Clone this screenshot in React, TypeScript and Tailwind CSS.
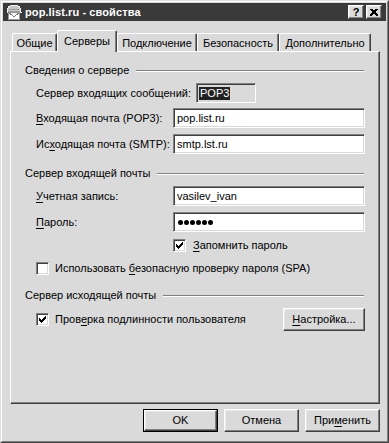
import React from "react";

const FONT = { fontFamily: '"Liberation Sans", Arial, sans-serif' };

function U({ children }: { children: React.ReactNode }) {
  return <span className="underline decoration-1 underline-offset-[2px]">{children}</span>;
}

function Sunken({ children, className = "" }: { children?: React.ReactNode; className?: string }) {
  return (
    <div
      className={
        "border border-t-[#808080] border-l-[#808080] border-b-white border-r-white shadow-[inset_1px_1px_0_#404040,inset_-1px_-1px_0_#dadada] " +
        className
      }
    >
      {children}
    </div>
  );
}

function Field({ value, children }: { value?: string; children?: React.ReactNode }) {
  return (
    <Sunken className="h-[20px] w-[192px] bg-white flex items-center pl-[3px] text-[11px] text-black">
      {children ?? value}
    </Sunken>
  );
}

function Check() {
  const px: [number, number][] = [
    [6, 0],
    [5, 1], [6, 1],
    [0, 2], [4, 2], [5, 2], [6, 2],
    [0, 3], [1, 3], [3, 3], [4, 3], [5, 3],
    [0, 4], [1, 4], [2, 4], [3, 4], [4, 4],
    [1, 5], [2, 5], [3, 5],
    [2, 6],
  ];
  return (
    <svg width="7" height="7" viewBox="0 0 7 7" shapeRendering="crispEdges">
      {px.map(([x, y], i) => (
        <rect key={i} x={x} y={y} width="1" height="1" fill="#000" />
      ))}
    </svg>
  );
}

function CheckBox({ checked }: { checked?: boolean }) {
  return (
    <Sunken className="w-[13px] h-[13px] bg-white flex items-center justify-center shrink-0">
      {checked && <Check />}
    </Sunken>
  );
}

function Raised({ children, className = "" }: { children?: React.ReactNode; className?: string }) {
  return (
    <div
      className={
        "bg-[#dadada] border border-t-white border-l-white border-b-[#404040] border-r-[#404040] shadow-[inset_-1px_-1px_0_#808080,inset_1px_1px_0_#e8e8e8] flex items-center justify-center " +
        className
      }
    >
      {children}
    </div>
  );
}

function GroupHeader({ title }: { title: string }) {
  return (
    <div className="flex items-center h-[13px] ml-[14px] mr-[15px]">
      <span className="text-[11px] leading-[13px] whitespace-nowrap">{title}</span>
      <div className="flex-1 ml-[7px] h-[2px] border-t border-t-[#808080] border-b border-b-white" />
    </div>
  );
}

function Tab({ label, w, selected }: { label: string; w: string; selected?: boolean }) {
  if (selected) {
    return (
      <div
        className={
          "relative z-10 -mb-px h-[22px] bg-[#dadada] border-t border-l border-t-white border-l-white border-r border-r-[#404040] shadow-[inset_-1px_0_0_#808080] rounded-t-[2px] flex items-start justify-center pt-[2px] text-[11px] " +
          w
        }
      >
        {label}
      </div>
    );
  }
  return (
    <div
      className={
        "h-[18px] bg-[#dadada] border-t border-l border-t-white border-l-white border-r border-r-[#404040] shadow-[inset_-1px_0_0_#808080] rounded-t-[2px] flex items-center justify-center pt-[1px] text-[11px] " +
        w
      }
    >
      {label}
    </div>
  );
}

function TitleIcon() {
  return (
    <svg width="17" height="16" viewBox="0 0 17 16" shapeRendering="crispEdges">
      <path d="M2 8 C2 3 5 1 9 1 C13 1 16 3 16 8 Z" fill="#c8c8c8" stroke="#f0f0f0" strokeWidth="1" />
      <path d="M4 5 L14 5" stroke="#9a9a9a" />
      <path d="M3 7 L15 7" stroke="#9a9a9a" />
      <rect x="3.5" y="8.5" width="11" height="7" fill="#ffffff" stroke="#9a9a9a" />
      <path d="M3.5 8.5 L9 12.5 L14.5 8.5" fill="none" stroke="#7a7a7a" />
    </svg>
  );
}

export default function App() {
  return (
    <div style={FONT} className="w-[389px] h-[443px] text-black">
      <div className="w-full h-full border border-t-[#e0e0e0] border-l-[#e0e0e0] border-b-[#404040] border-r-[#404040]">
        <div className="w-full h-full border border-t-white border-l-white border-b-[#808080] border-r-[#808080] bg-[#dadada] p-px flex flex-col">
          {/* Title bar */}
          <div className="h-[18px] bg-[#3a3a3a] flex items-center pl-[2px] pr-[4px]">
            <TitleIcon />
            <span className="ml-[3px] text-white font-bold text-[11px] leading-none tracking-[0.1px]">
              pop.list.ru - свойства
            </span>
            <div className="ml-auto flex items-center gap-[2px]">
              <Raised className="w-[16px] h-[14px]">
                <span className="font-bold text-[11px] leading-none mt-[1px]">?</span>
              </Raised>
              <Raised className="w-[16px] h-[14px]">
                <svg width="8" height="7" viewBox="0 0 8 7" shapeRendering="crispEdges">
                  <path d="M0.5 0 L7.5 7 M1.5 0 L8.5 7 M7.5 0 L0.5 7 M6.5 0 L-0.5 7" stroke="#000" strokeWidth="1" />
                </svg>
              </Raised>
            </div>
          </div>

          {/* Tabs */}
          <div className="ml-[7px] mt-[9px] pl-[2px] flex items-end h-[21px]">
            <Tab label="Общие" w="w-[45px]" />
            <Tab label="Серверы" w="w-[60px]" selected />
            <Tab label="Подключение" w="w-[80px]" />
            <Tab label="Безопасность" w="w-[82px]" />
            <Tab label="Дополнительно" w="w-[92px]" />
          </div>

          {/* Panel */}
          <div className="ml-[7px] w-[370px] h-[353px] border border-t-white border-l-white border-b-[#404040] border-r-[#404040] shadow-[inset_-1px_-1px_0_#808080] text-[11px] flex flex-col">
            <div className="mt-[12px]">
              <GroupHeader title="Сведения о сервере" />
            </div>

            <div className="mt-[6px] h-[20px] flex items-center pl-[25px]">
              <span className="w-[160px]">Сервер входящих сообщений:</span>
              <Sunken className="w-[60px] h-[20px] bg-[#dadada] flex items-center pl-[2px]">
                <span className="bg-[#222] text-white px-[1px] leading-[13px]">POP3</span>
              </Sunken>
            </div>

            <div className="mt-[5px] h-[20px] flex items-center pl-[25px]">
              <span className="w-[137px]">
                <U>В</U>ходящая почта (POP3):
              </span>
              <Field value="pop.list.ru" />
            </div>

            <div className="mt-[6px] h-[20px] flex items-center pl-[25px]">
              <span className="w-[137px]">
                Ис<U>х</U>одящая почта (SMTP):
              </span>
              <Field value="smtp.lst.ru" />
            </div>

            <div className="mt-[13px]">
              <GroupHeader title="Сервер входящей почты" />
            </div>

            <div className="mt-[6px] h-[20px] flex items-center pl-[25px]">
              <span className="w-[137px]">
                <U>У</U>четная запись:
              </span>
              <Field value="vasilev_ivan" />
            </div>

            <div className="mt-[6px] h-[20px] flex items-center pl-[25px]">
              <span className="w-[137px]">
                <U>П</U>ароль:
              </span>
              <Field>
                <span className="flex items-center gap-[1px] pl-[1px]">
                  {[0, 1, 2, 3, 4, 5].map((i) => (
                    <span key={i} className="inline-block w-[5px] h-[5px] rounded-full bg-black" />
                  ))}
                </span>
              </Field>
            </div>

            <div className="mt-[7px] h-[13px] flex items-center pl-[162px]">
              <CheckBox checked />
              <span className="ml-[7px]">
                <U>З</U>апомнить пароль
              </span>
            </div>

            <div className="mt-[10px] h-[13px] flex items-center pl-[25px]">
              <CheckBox />
              <span className="ml-[6px]">
                Использовать <U>б</U>езопасную проверку пароля (SPA)
              </span>
            </div>

            <div className="mt-[14px]">
              <GroupHeader title="Сервер исходящей почты" />
            </div>

            <div className="mt-[6px] h-[23px] flex items-center pl-[25px] pr-[14px]">
              <CheckBox checked />
              <span className="ml-[6px]">
                Пров<U>е</U>рка подлинности пользователя
              </span>
              <Raised className="ml-auto w-[82px] h-[23px]">
                <span>
                  <U>Н</U>астройка...
                </span>
              </Raised>
            </div>
          </div>

          {/* Bottom buttons */}
          <div className="mt-[5px] ml-[140px] flex gap-[6px] text-[11px]">
            <div className="w-[75px] h-[23px] border border-black">
              <Raised className="w-full h-full">OK</Raised>
            </div>
            <Raised className="w-[75px] h-[23px]">Отмена</Raised>
            <Raised className="w-[75px] h-[23px]">
              <span>
                При<U>м</U>енить
              </span>
            </Raised>
          </div>
        </div>
      </div>
    </div>
  );
}
